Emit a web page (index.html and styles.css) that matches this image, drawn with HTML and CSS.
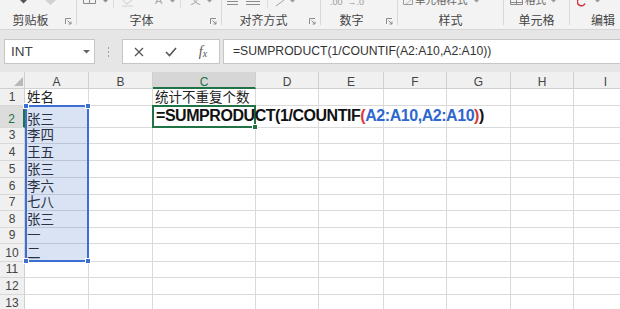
FILE: index.html
```html
<!DOCTYPE html>
<html lang="zh-CN">
<head>
    <meta charset="UTF-8">
    <title>Excel - SUMPRODUCT</title>
    <link rel="stylesheet" href="styles.css">
</head>
<body>

    <!-- Ribbon (bottom strip only) -->
    <div class="ribbon">
        <div class="group g-clip">
            <div class="tools">
                <svg class="t" style="margin-left:19px" width="9" height="10"><polygon points="1,0 8,0 4.5,3.5" fill="#555"/></svg>
                <svg class="t" style="margin-left:17px" width="11" height="10"><polygon points="0,0 11,0 5.5,5" fill="#d2d2d2"/></svg>
            </div>
            <div class="label-row"><span class="label">剪贴板</span><svg class="launcher" width="7" height="7"><path d="M0.5 6V0.5H6M2.5 2.5L6 6M6 3.5V6H3.5" stroke="#8c8c8c" fill="none"/></svg></div>
        </div>
        <div class="sep"></div>
        <div class="group g-font">
            <div class="tools">
                <svg class="t" style="margin-left:6px" width="13" height="10"><path d="M0.5 0v3.5h12V0M6.5 0v3.5" stroke="#8a8a8a" fill="none"/></svg>
                <svg class="t" style="margin-left:7px" width="5" height="10"><polygon points="0,0 5,0 2.5,2.5" fill="#8a8a8a"/></svg>
                <span class="tsep" style="margin-left:5px"></span>
                <svg class="t" style="margin-left:8px" width="11" height="10"><path d="M0.5 0l4.5 4 5-4" stroke="#c8c8c8" fill="none"/><rect x="0" y="5" width="11" height="2" fill="#e2e2e2"/></svg>
                <span class="ttext pale" style="margin-left:22px">A</span>
                <svg class="t" style="margin-left:8px" width="5" height="10"><polygon points="0,0 5,0 2.5,2.5" fill="#9a9a9a"/></svg>
                <span class="tsep" style="margin-left:5px"></span>
                <span class="ttext pale cjk" style="margin-left:9px">文</span>
                <svg class="t" style="margin-left:6px" width="5" height="10"><polygon points="0,0 5,0 2.5,2.5" fill="#9a9a9a"/></svg>
            </div>
            <div class="label-row"><span class="label">字体</span><svg class="launcher" width="7" height="7"><path d="M0.5 6V0.5H6M2.5 2.5L6 6M6 3.5V6H3.5" stroke="#8c8c8c" fill="none"/></svg></div>
        </div>
        <div class="sep"></div>
        <div class="group g-align">
            <div class="tools">
                <svg class="t" style="margin-left:5px" width="11" height="10"><path d="M0 1.5h11M0 4.5h11" stroke="#8c8c8c"/></svg>
                <svg class="t" style="margin-left:8px" width="14" height="10"><path d="M0 1.5h14M0 4.5h14" stroke="#8c8c8c"/></svg>
                <span class="tsep" style="margin-left:7px"></span>
                <svg class="t" style="margin-left:7px" width="12" height="10"><path d="M1 6L9 0" stroke="#a0a0a0"/></svg>
                <svg class="t" style="margin-left:3px" width="5" height="10"><polygon points="0,0 5,0 2.5,2.5" fill="#9a9a9a"/></svg>
            </div>
            <div class="label-row"><span class="label">对齐方式</span><svg class="launcher" width="7" height="7"><path d="M0.5 6V0.5H6M2.5 2.5L6 6M6 3.5V6H3.5" stroke="#8c8c8c" fill="none"/></svg></div>
        </div>
        <div class="sep"></div>
        <div class="group g-num">
            <div class="tools">
                <span class="ttext small" style="margin-left:9px">.00 &nbsp;→.0</span>
            </div>
            <div class="label-row"><span class="label">数字</span><svg class="launcher" width="7" height="7"><path d="M0.5 6V0.5H6M2.5 2.5L6 6M6 3.5V6H3.5" stroke="#8c8c8c" fill="none"/></svg></div>
        </div>
        <div class="sep"></div>
        <div class="group g-style">
            <div class="tools">
                <svg class="t" style="margin-left:5px" width="10" height="10"><path d="M0.5 0v4.5h9V0" stroke="#9a9a9a" fill="none"/><path d="M3 4l5-4" stroke="#b8b8b8"/></svg>
                <span class="ttext cjk" style="margin-left:2px">单元格样式</span>
                <svg class="t" style="margin-left:6px" width="5" height="10"><polygon points="0,0 5,0 2.5,2.5" fill="#9a9a9a"/></svg>
            </div>
            <div class="label-row"><span class="label">样式</span></div>
        </div>
        <div class="sep"></div>
        <div class="group g-cell">
            <div class="tools">
                <svg class="t" style="margin-left:6px" width="13" height="10"><path d="M0.5 0v4.5h12V0M0.5 2.5h12M6.5 0v4.5" stroke="#8a8a8a" fill="none"/></svg>
                <span class="ttext cjk" style="margin-left:2px">格式</span>
                <svg class="t" style="margin-left:5px" width="5" height="10"><polygon points="0,0 5,0 2.5,2.5" fill="#9a9a9a"/></svg>
            </div>
            <div class="label-row"><span class="label">单元格</span></div>
        </div>
        <div class="sep"></div>
        <div class="group g-edit">
            <div class="tools">
                <svg class="t" style="margin-left:7px" width="9" height="10"><path d="M0.8 0A4 4 0 0 0 8 3.5" stroke="#d13438" stroke-width="1.6" fill="none"/></svg>
                <svg class="t" style="margin-left:9px" width="5" height="10"><polygon points="0,0 5,0 2.5,2.5" fill="#9a9a9a"/></svg>
            </div>
            <div class="label-row"><span class="label">编辑</span></div>
        </div>
    </div>

    <!-- Formula bar -->
    <div class="fbar">
        <div class="namebox">
            <span>INT</span>
            <svg class="drop" width="7" height="4"><polygon points="0,0 7,0 3.5,3.5" fill="#666"/></svg>
        </div>
        <div class="grip"><i></i><i></i><i></i></div>
        <div class="fbtns">
            <span class="fbtn"><svg width="10" height="10"><path d="M1 1L9 9M9 1L1 9" stroke="#555" stroke-width="1.3"/></svg></span>
            <span class="fbtn"><svg width="12" height="10"><path d="M1 5l3.5 3.5L11 1" stroke="#555" stroke-width="1.6" fill="none"/></svg></span>
            <span class="fbtn fx"><i>f</i><small>x</small></span>
        </div>
        <div class="finput">=SUMPRODUCT(1/COUNTIF(A2:A10,A2:A10))</div>
    </div>

    <!-- Worksheet -->
    <div class="sheet">
        <div class="cells" id="cells"></div>
        <div class="marks">
            <div class="range"><i class="h tl"></i><i class="h tr"></i><i class="h bl"></i><i class="h br"></i></div>
            <div class="editor">=SUMPRODUCT(1/COUNTIF<span class="red">(</span><span class="blue">A2:A10,A2:A10</span><span class="red">)</span>)<i class="fill"></i></div>
        </div>
    </div>

    <script>
        // Build headers and cells
        const letters = ['A', 'B', 'C', 'D', 'E', 'F', 'G', 'H', 'I'];
        const data = {
            A1: '姓名', A2: '张三', A3: '李四', A4: '王五', A5: '张三',
            A6: '李六', A7: '七八', A8: '张三', A9: '一', A10: '二',
            C1: '统计不重复个数'
        };

        let html = '<div class="corner"><svg width="25" height="17"><polygon points="23,5 23,14 14,14" fill="#b8b8b8"/></svg></div>';
        letters.forEach(l => {
            html += `<div class="ch${l === 'C' ? ' on' : ''}">${l}</div>`;
        });
        for (let r = 1; r <= 13; r++) {
            html += `<div class="rh${r === 2 ? ' on' : ''}">${r}</div>`;
            letters.forEach(l => {
                html += `<div class="cell">${data[l + r] || ''}</div>`;
            });
        }
        document.getElementById('cells').innerHTML = html;
    </script>

</body>
</html>
```

FILE: styles.css
```css
body {
    margin: 0;
    width: 620px;
    height: 309px;
    overflow: hidden;
    background: #e6e6e6;
    font-family: 'Liberation Sans', 'Noto Sans CJK SC', sans-serif;
}

/* ribbon */
.ribbon {
    display: flex;
    height: 29px;
    background: #f3f3f3;
    border-bottom: 1px solid #d5d5d5;
    overflow: hidden;
}
.group {
    display: flex;
    flex-direction: column;
    flex: none;
}
.g-clip { width: 76px; }
.g-font { width: 144px; }
.g-align { width: 98px; }
.g-num { width: 76px; }
.g-style { width: 105px; }
.g-cell { width: 65px; }
.g-edit { width: 66px; }
.sep {
    flex: none;
    width: 1px;
    height: 25px;
    background: #d8d8d8;
}
.tools {
    display: flex;
    align-items: flex-start;
    height: 10px;
    overflow: hidden;
}
.tools .t {
    flex: none;
}
.tsep {
    flex: none;
    width: 1px;
    height: 8px;
    background: #dcdcdc;
}
.ttext {
    flex: none;
    margin-top: -6px;
    font-size: 11px;
    line-height: 12px;
    color: #666;
    white-space: nowrap;
}
.ttext.cjk {
    font-family: 'Noto Sans CJK SC', sans-serif;
    font-size: 10.5px;
}
.ttext.pale {
    color: #a8a8a8;
}
.ttext.small {
    margin-top: -4px;
    font-size: 9px;
    color: #9a9a9a;
}
.label-row {
    display: flex;
    align-items: center;
    height: 18px;
    padding-top: 1px;
}
.label {
    flex: 1;
    padding-right: 4px;
    text-align: center;
    font-family: 'Noto Sans CJK SC', sans-serif;
    font-size: 12px;
    line-height: 14px;
    color: #444;
}
.g-style .label,
.g-cell .label,
.g-edit .label {
    padding-right: 0;
}
.launcher {
    flex: none;
    margin-right: 4px;
    margin-top: 3px;
}

/* formula bar */
.fbar {
    display: flex;
    height: 25px;
    padding: 9px 0 8px 4px;
}
.namebox {
    display: flex;
    align-items: center;
    box-sizing: border-box;
    width: 91px;
    padding: 0 4px 0 6px;
    background: #fff;
    border: 1px solid #c6c6c6;
    font-size: 13.5px;
    color: #444;
}
.namebox .drop {
    margin-left: auto;
}
.grip {
    display: flex;
    flex-direction: column;
    align-items: center;
    justify-content: center;
    gap: 2px;
    width: 27px;
}
.grip i {
    width: 1px;
    height: 2px;
    background: #a0a0a0;
}
.fbtns {
    display: flex;
    box-sizing: border-box;
    width: 98px;
    background: #fff;
    border: 1px solid #c6c6c6;
}
.fbtn {
    display: flex;
    align-items: center;
    justify-content: center;
    width: 32px;
}
.fx {
    font-family: 'Liberation Serif', serif;
    font-style: italic;
    color: #555;
    font-size: 14px;
}
.fx small {
    font-size: 10px;
    margin-top: 4px;
}
.finput {
    flex: 1;
    margin-left: 3px;
    padding-left: 9px;
    background: #fff;
    border: 1px solid #c6c6c6;
    border-right: none;
    font-size: 12.2px;
    line-height: 23px;
    color: #333;
    white-space: nowrap;
}

/* worksheet */
.sheet {
    position: relative;
    background: #fff;
}
.cells,
.marks {
    display: grid;
    grid-template-columns: 25px 64px 64px 103px 63px 65px 63px 64px 63px 64px;
    grid-template-rows: 17px 17px 22px 16px 17px 17px 17px 16px 17px 16px 18px 16px 17px 17px;
}
.marks {
    position: absolute;
    inset: 0;
}
.cells > div {
    box-sizing: border-box;
    display: flex;
    overflow: hidden;
    white-space: nowrap;
}
.corner {
    background: #f0f0f0;
    border-right: 1px solid #d0d0d0;
    border-bottom: 1px solid #d0d0d0;
}
.ch {
    justify-content: center;
    padding-top: 4px;
    background: #f0f0f0;
    border-right: 1px solid #d0d0d0;
    border-bottom: 1px solid #d0d0d0;
    font-size: 12px;
    line-height: 12px;
    color: #444;
}
.ch.on {
    background: #d6d6d6;
    color: #217346;
    border-bottom: 2px solid #217346;
}
.rh {
    justify-content: center;
    align-items: flex-end;
    padding-bottom: 2px;
    background: #f0f0f0;
    border-right: 1px solid #d0d0d0;
    border-bottom: 1px solid #d8d8d8;
    font-size: 12px;
    line-height: 12px;
    color: #444;
}
.rh.on {
    background: #dcdcdc;
    color: #217346;
    border-right: 2px solid #217346;
}
.cell {
    align-items: flex-end;
    padding: 0 0 2px 2px;
    border-right: 1px solid #dadada;
    border-bottom: 1px solid #dadada;
    font-family: 'Noto Sans CJK SC', sans-serif;
    font-size: 13.5px;
    line-height: 13px;
    color: #222;
}

/* reference range A2:A10 */
.range {
    grid-column: 2;
    grid-row: 3 / span 9;
    position: relative;
    margin-top: -1px;
    border: 2px solid #3c6fd1;
    background: rgba(68, 114, 196, 0.2);
}
.h {
    position: absolute;
    width: 4px;
    height: 4px;
    background: #3c6fd1;
    border: 1px solid #fff;
}
.tl { left: -4px; top: -4px; }
.tr { right: -4px; top: -4px; }
.bl { left: -4px; bottom: -4px; }
.br { right: -4px; bottom: -4px; }

/* active cell C2 in edit mode */
.editor {
    grid-column: 4;
    grid-row: 3;
    position: relative;
    margin: -1px 0 0 -1px;
    padding-left: 2px;
    border: 2px solid #217346;
    font-weight: bold;
    font-size: 16px;
    line-height: 18px;
    letter-spacing: -0.45px;
    color: #111;
    white-space: nowrap;
}
.editor .red {
    color: #d9383a;
}
.editor .blue {
    color: #2e67cf;
}
.fill {
    position: absolute;
    right: -4px;
    bottom: -4px;
    width: 4px;
    height: 4px;
    background: #217346;
    border: 1px solid #fff;
}
```
